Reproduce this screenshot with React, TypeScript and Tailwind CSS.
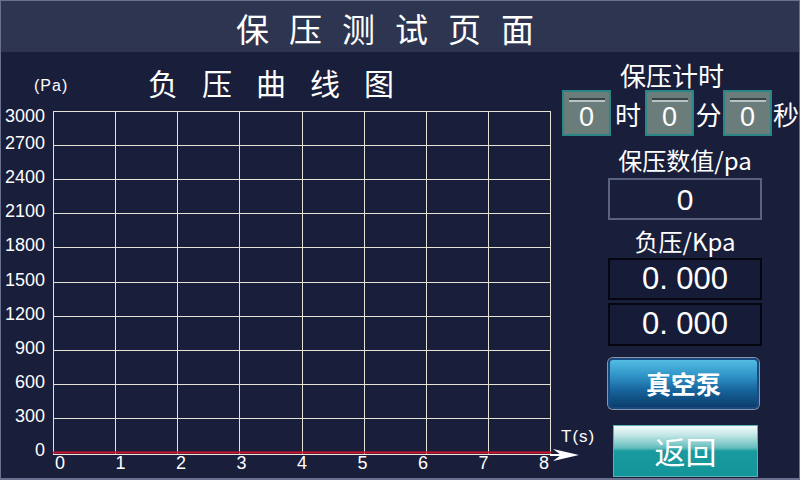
const cjk = "font-['Noto_Sans_CJK_SC','Noto_Sans',sans-serif]";
const num = "font-['Liberation_Sans',Arial,sans-serif]";

const yLabels = ['3000', '2700', '2400', '2100', '1800', '1500', '1200', '900', '600', '300', '0'];
const gridTop = 111;
const gridBottom = 452;
const gridLeft = 52;
const gridRight = 549;
const rowH = (gridBottom - gridTop) / 10;
const colW = (gridRight - gridLeft) / 8;

function Chart() {
  return (
    <svg
      width={556}
      height={374}
      viewBox="0 104 556 374"
      className="overflow-visible"
      fontFamily="'Liberation Sans', Arial, sans-serif"
    >
      {Array.from({ length: 11 }).map((_, i) => {
        const y = Math.round(gridTop + i * rowH) + 0.5;
        return <line key={'h' + i} x1={gridLeft} x2={gridRight} y1={y} y2={y} stroke="#e6e2d6" strokeWidth={1} />;
      })}
      {Array.from({ length: 9 }).map((_, i) => {
        const x = Math.round(gridLeft + i * colW) + 0.5;
        return <line key={'v' + i} x1={x} x2={x} y1={gridTop} y2={gridBottom + 2} stroke="#e6e2d6" strokeWidth={1} />;
      })}
      <line x1={gridLeft} x2={gridRight + 1} y1={454.5} y2={454.5} stroke="#ece8e0" strokeWidth={1} />
      <line x1={gridLeft} x2={gridRight + 1} y1={452.5} y2={452.5} stroke="#d0142e" strokeWidth={2} />

      {yLabels.map((t, i) => {
        const y = i === 0 ? 116 : gridTop + i * rowH - 2;
        return (
          <text key={t} x={44} y={y} textAnchor="end" dominantBaseline="central" fill="#ffffff" fontSize={18}>
            {t}
          </text>
        );
      })}
      {Array.from({ length: 9 }).map((_, i) => (
        <text key={'x' + i} x={59 + i * 60.5} y={463} textAnchor="middle" dominantBaseline="central" fill="#ffffff" fontSize={18}>
          {i}
        </text>
      ))}

      <line x1={549} x2={562} y1={455} y2={455} stroke="#ffffff" strokeWidth={2} />
      <polygon points="552,449 578,455 552,461 560,455" fill="#ffffff" />
      <text x={560} y={436} dominantBaseline="central" fill="#ffffff" fontSize={17} letterSpacing={1}>
        T(s)
      </text>
    </svg>
  );
}

function TimeBox() {
  return (
    <div className="flex h-[46px] w-[49px] shrink-0 flex-col items-center border-2 border-[#2a8686] bg-[#6b7d7b] pt-[6px]">
      <div className="h-[4px] w-[36px] border-t-2 border-[#3a4444] bg-[#b8c4c4]" />
      <div className={`${num} text-[27px] leading-[30px] text-white`}>0</div>
    </div>
  );
}

function Reading() {
  return (
    <div className={`${num} text-[31px] text-white`}>
      0<span className="inline-block w-[17px]">.</span>000
    </div>
  );
}

export default function App() {
  return (
    <div className={`${cjk} flex h-[480px] w-[800px] flex-col overflow-hidden border border-b-2 border-[#6a7090] bg-[#191e3a] text-white`}>
      <div className="flex h-[51px] shrink-0 items-center justify-center bg-[#2e3551] pr-[10px] pt-[4px]">
        <span className="text-[33px] leading-none tracking-[20px]">保压测试页面</span>
      </div>

      <div className="flex flex-1">
        <div className="flex w-[556px] shrink-0 flex-col">
          <div className="flex h-[52px] items-center pl-[33px] pt-[8px]">
            <span className={`${num} mt-[8px] w-[114px] shrink-0 text-[16px] tracking-[1px]`}>(Pa)</span>
            <span className="text-[30px] leading-none tracking-[24px]">负压曲线图</span>
          </div>
          <Chart />
        </div>

        <div className="flex flex-1 flex-col">
          <div className="mt-[8px] h-[30px] pl-[63px] text-[26px] leading-[30px]">保压计时</div>
          <div className="ml-[5px] flex h-[46px] items-center">
            <TimeBox />
            <span className="w-[34px] text-center text-[26px]">时</span>
            <TimeBox />
            <span className="w-[29px] text-center text-[26px]">分</span>
            <TimeBox />
            <span className="w-[28px] text-center text-[26px]">秒</span>
          </div>

          <div className="ml-[51px] mt-[10px] h-[28px] w-[154px] text-center text-[24px] leading-[28px]">
            保压数值/pa
          </div>
          <div className={`${num} ml-[51px] mt-[4px] flex h-[42px] w-[154px] items-center justify-center border-2 border-[#5a6282] text-[30px]`}>
            0
          </div>

          <div className="ml-[51px] mt-[7px] h-[28px] w-[154px] text-center text-[24px] leading-[28px]">
            负压/Kpa
          </div>
          <div className="ml-[51px] mt-[3px] flex h-[42px] w-[154px] items-center justify-center border-2 border-[#05060f] bg-[#161b37]">
            <Reading />
          </div>
          <div className="ml-[51px] mt-[3px] flex h-[43px] w-[154px] items-center justify-center border-2 border-[#05060f] bg-[#161b37]">
            <Reading />
          </div>

          <button className="ml-[51px] mt-[12px] flex h-[51px] w-[151px] items-center justify-center rounded-[5px] border-2 border-[#1a4a82] bg-[linear-gradient(to_bottom,#52bce2_0%,#2f92c6_35%,#17639c_65%,#0b3e6b_100%)] text-[25px] font-semibold text-white ring-1 ring-[#8a96ac]">
            真空泵
          </button>
          <button className="ml-[56px] mt-[16px] flex h-[52px] w-[145px] items-center justify-center border border-[#5fb2b4] bg-[linear-gradient(to_bottom,#f4fbfb_0%,#c4e6e6_18%,#62bcbe_44%,#1a9a9e_50%,#12959a_100%)] text-[31px] text-white">
            返回
          </button>
        </div>
      </div>
    </div>
  );
}
